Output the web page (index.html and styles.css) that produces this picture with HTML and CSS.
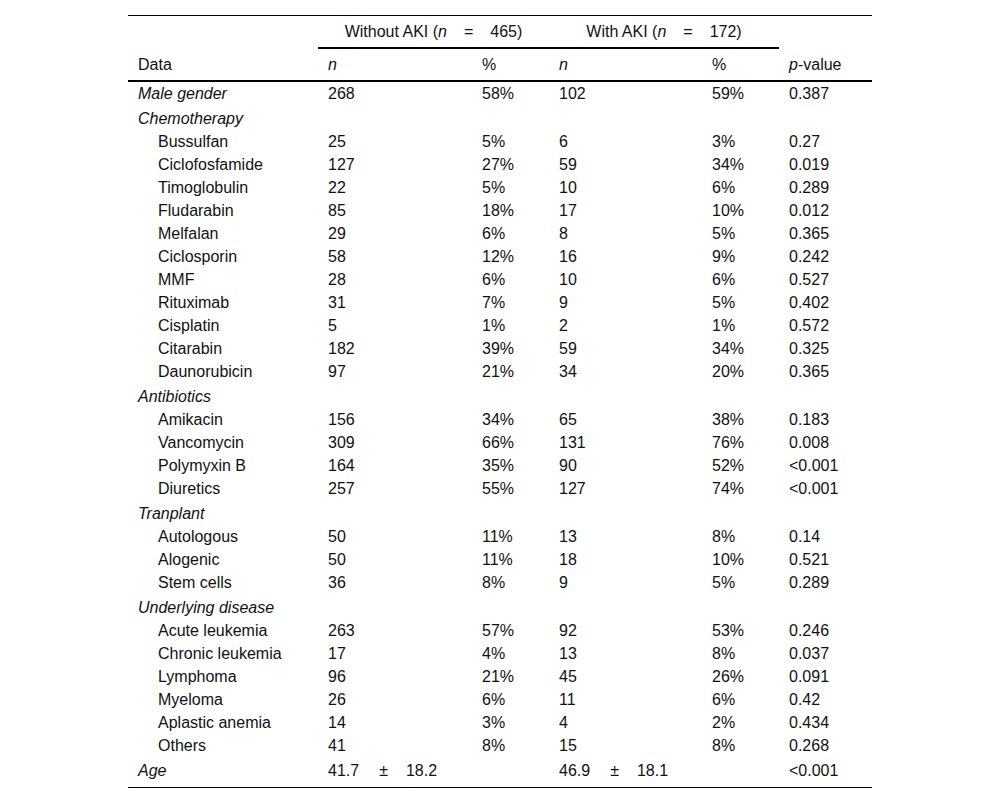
FILE: index.html
```html
<!DOCTYPE html>
<html lang="en">
<head>
    <meta charset="UTF-8">
    <title>AKI table</title>
    <link rel="stylesheet" href="styles.css">
</head>
<body>
    <div class="table-wrap">
        <table class="data-table">
            <colgroup>
                <col class="c-label">
                <col class="c-n">
                <col class="c-pct">
                <col class="c-n2">
                <col class="c-pct">
                <col class="c-p">
            </colgroup>
            <thead>
                <tr class="group-row">
                    <th></th>
                    <th colspan="2" class="group">Without AKI (<i>n</i><span class="eq">=</span>465)</th>
                    <th colspan="2" class="group">With AKI (<i>n</i><span class="eq">=</span>172)</th>
                    <th></th>
                </tr>
                <tr class="head-row">
                    <th>Data</th>
                    <th><i>n</i></th>
                    <th>%</th>
                    <th><i>n</i></th>
                    <th>%</th>
                    <th><i>p</i>-value</th>
                </tr>
            </thead>
            <tbody>
                <tr><td><i>Male gender</i></td><td>268</td><td>58%</td><td>102</td><td>59%</td><td>0.387</td></tr>

                <tr class="section"><td colspan="6"><i>Chemotherapy</i></td></tr>
                <tr><td class="sub">Bussulfan</td><td>25</td><td>5%</td><td>6</td><td>3%</td><td>0.27</td></tr>
                <tr><td class="sub">Ciclofosfamide</td><td>127</td><td>27%</td><td>59</td><td>34%</td><td>0.019</td></tr>
                <tr><td class="sub">Timoglobulin</td><td>22</td><td>5%</td><td>10</td><td>6%</td><td>0.289</td></tr>
                <tr><td class="sub">Fludarabin</td><td>85</td><td>18%</td><td>17</td><td>10%</td><td>0.012</td></tr>
                <tr><td class="sub">Melfalan</td><td>29</td><td>6%</td><td>8</td><td>5%</td><td>0.365</td></tr>
                <tr><td class="sub">Ciclosporin</td><td>58</td><td>12%</td><td>16</td><td>9%</td><td>0.242</td></tr>
                <tr><td class="sub">MMF</td><td>28</td><td>6%</td><td>10</td><td>6%</td><td>0.527</td></tr>
                <tr><td class="sub">Rituximab</td><td>31</td><td>7%</td><td>9</td><td>5%</td><td>0.402</td></tr>
                <tr><td class="sub">Cisplatin</td><td>5</td><td>1%</td><td>2</td><td>1%</td><td>0.572</td></tr>
                <tr><td class="sub">Citarabin</td><td>182</td><td>39%</td><td>59</td><td>34%</td><td>0.325</td></tr>
                <tr><td class="sub">Daunorubicin</td><td>97</td><td>21%</td><td>34</td><td>20%</td><td>0.365</td></tr>

                <tr class="section"><td colspan="6"><i>Antibiotics</i></td></tr>
                <tr><td class="sub">Amikacin</td><td>156</td><td>34%</td><td>65</td><td>38%</td><td>0.183</td></tr>
                <tr><td class="sub">Vancomycin</td><td>309</td><td>66%</td><td>131</td><td>76%</td><td>0.008</td></tr>
                <tr><td class="sub">Polymyxin B</td><td>164</td><td>35%</td><td>90</td><td>52%</td><td>&lt;0.001</td></tr>
                <tr><td class="sub">Diuretics</td><td>257</td><td>55%</td><td>127</td><td>74%</td><td>&lt;0.001</td></tr>

                <tr class="section"><td colspan="6"><i>Tranplant</i></td></tr>
                <tr><td class="sub">Autologous</td><td>50</td><td>11%</td><td>13</td><td>8%</td><td>0.14</td></tr>
                <tr><td class="sub">Alogenic</td><td>50</td><td>11%</td><td>18</td><td>10%</td><td>0.521</td></tr>
                <tr><td class="sub">Stem cells</td><td>36</td><td>8%</td><td>9</td><td>5%</td><td>0.289</td></tr>

                <tr class="section"><td colspan="6"><i>Underlying disease</i></td></tr>
                <tr><td class="sub">Acute leukemia</td><td>263</td><td>57%</td><td>92</td><td>53%</td><td>0.246</td></tr>
                <tr><td class="sub">Chronic leukemia</td><td>17</td><td>4%</td><td>13</td><td>8%</td><td>0.037</td></tr>
                <tr><td class="sub">Lymphoma</td><td>96</td><td>21%</td><td>45</td><td>26%</td><td>0.091</td></tr>
                <tr><td class="sub">Myeloma</td><td>26</td><td>6%</td><td>11</td><td>6%</td><td>0.42</td></tr>
                <tr><td class="sub">Aplastic anemia</td><td>14</td><td>3%</td><td>4</td><td>2%</td><td>0.434</td></tr>
                <tr><td class="sub">Others</td><td>41</td><td>8%</td><td>15</td><td>8%</td><td>0.268</td></tr>

                <tr class="last"><td><i>Age</i></td><td colspan="2">41.7<span class="pm">±</span>18.2</td><td colspan="2">46.9<span class="pm">±</span>18.1</td><td>&lt;0.001</td></tr>
            </tbody>
        </table>
    </div>
</body>
</html>
```

FILE: styles.css
```css
* {
    box-sizing: border-box;
    margin: 0;
    padding: 0;
}

body {
    font-family: "Liberation Sans", Arial, sans-serif;
    font-size: 16px;
    color: #111;
    background-color: #fff;
}

.table-wrap {
    padding-top: 15px;
}

.data-table {
    width: 744px;
    margin: 0 auto;
    border-collapse: collapse;
    border-top: 1px solid #000;
    border-bottom: 1px solid #000;
    table-layout: fixed;
    line-height: 18px;
}

.c-label { width: 190px; }
.c-n { width: 154px; }
.c-n2 { width: 153px; }
.c-pct { width: 77px; }
.c-p { width: 93px; }

th {
    font-weight: normal;
    text-align: left;
    padding: 0 10px;
}

.group-row th {
    padding-top: 7px;
    padding-bottom: 6px;
}

.group-row th.group {
    text-align: center;
    border-bottom: 2px solid #000;
}

.head-row th {
    padding-top: 7px;
    padding-bottom: 6px;
    border-bottom: 2px solid #000;
}

.eq {
    margin: 0 17px;
}

td {
    padding: 3px 10px 2px;
    white-space: nowrap;
}

.section td {
    padding-top: 5px;
}

td.sub {
    padding-left: 30px;
}

.last td {
    padding-top: 5px;
    padding-bottom: 7px;
}

.pm {
    margin: 0 18px 0 20px;
}
```
